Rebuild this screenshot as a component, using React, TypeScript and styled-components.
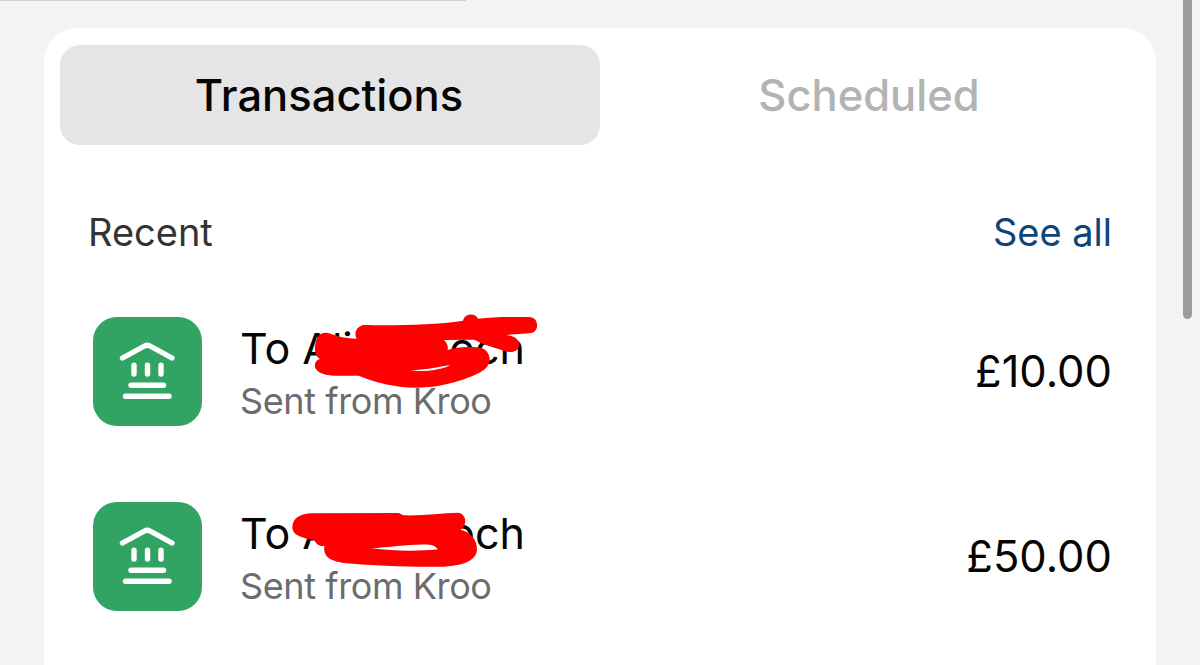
import { useState } from 'react';
import styled, { createGlobalStyle } from 'styled-components';

const GlobalStyle = createGlobalStyle`
    * {
        box-sizing: border-box;
    }

    body {
        margin: 0;
        overflow: hidden;
        background: #f4f4f7;
        font-family: Inter, 'Liberation Sans', sans-serif;
    }
`;

const Screen = styled.div`
    position: relative;
    height: 665px;
    padding: 28px 44px 0;
    overflow: hidden;
`;

const TopDivider = styled.div`
    position: absolute;
    top: 0;
    left: 0;
    width: 466px;
    height: 1px;
    background: #d2d2d5;
`;

const ScrollThumb = styled.div`
    position: absolute;
    top: -10px;
    right: 8px;
    width: 9px;
    height: 329px;
    border-radius: 5px;
    background: #9c9c9e;
`;

const Card = styled.main`
    height: 700px;
    padding: 17px 16px 0;
    border-radius: 34px;
    background: #fff;
`;

const TabList = styled.div`
    display: grid;
    grid-template-columns: 1fr 1fr;
    height: 100px;
`;

const TabButton = styled.button<{ $isActive: boolean }>`
    padding: 0 2px 0 0;
    border: none;
    border-radius: 20px;
    background: ${(props) => (props.$isActive ? '#e5e5e5' : 'transparent')};
    color: ${(props) => (props.$isActive ? '#050505' : '#b3b3b3')};
    font-family: inherit;
    font-size: 43.5px;
    font-weight: 500;
    line-height: 54px;
    cursor: pointer;
`;

const SectionHeader = styled.div`
    display: flex;
    justify-content: space-between;
    align-items: center;
    height: 50px;
    margin-top: 62px;
    padding: 0 28px;
`;

const SectionTitleTypo = styled.div`
    color: #333;
    font-size: 38px;
    line-height: 46px;
`;

const SeeAllLink = styled.a`
    color: #0f4478;
    font-size: 38px;
    line-height: 46px;
    cursor: pointer;
`;

const TransactionList = styled.div`
    display: flex;
    flex-direction: column;
    gap: 76px;
    padding: 60px 28px 0 33px;
`;

const TransactionRow = styled.div`
    display: flex;
    align-items: center;
    height: 109px;
`;

const BankBadge = styled.div`
    width: 109px;
    height: 109px;
    border-radius: 24px;
    background: #31a464;
`;

const TransactionInfo = styled.div`
    position: relative;
    flex: 1;
    height: 109px;
    margin-left: 38px;
    padding-top: 5px;
`;

const PayeeTypo = styled.div`
    display: flex;
    width: 285px;
    color: #050505;
    font-size: 43px;
    line-height: 52px;
    white-space: pre;
`;

const PayeeEnd = styled.span`
    margin-left: auto;
`;

const SourceTypo = styled.div`
    padding-top: 1px;
    color: #6c6c6c;
    font-size: 36px;
    line-height: 52px;
    letter-spacing: -0.4px;
`;

const Scribble = styled.svg<{ $top: number }>`
    position: absolute;
    top: ${(props) => props.$top}px;
    left: -10px;
    width: 320px;
    height: 130px;
`;

const AmountTypo = styled.div`
    padding-bottom: 2px;
    color: #050505;
    font-size: 43.5px;
    line-height: 54px;
`;

interface ITransaction {
    id: number;
    start: string;
    end: string;
    source: string;
    amount: string;
    scribble: string;
    scribbleTop: number;
}

// Scribbles are drawn on a 960x390 grid and scaled down to the payee area
const transactions: ITransaction[] = [
    {
        id: 1,
        start: 'To Ali',
        end: 'och',
        source: 'Sent from Kroo',
        amount: '£10.00',
        scribbleTop: -17,
        scribble:
            'M256 133C258 112 270 98 287 98C305 98 316 113 380 116C370 99 381 77 403 75C490 77 615 75 699 62C704 40 735 38 744 56C790 50 850 51 897 51C929 51 930 99 898 100L825 105C848 106 868 116 868 134C866 154 847 160 824 153L758 132C745 125 737 120 731 119L642 120C652 130 655 140 653 150C682 140 711 140 743 142C768 144 781 163 779 183C773 213 735 226 695 240C655 253 611 263 555 263C493 262 437 247 386 227L310 227C276 225 251 213 255 192C257 183 264 178 270 177C257 170 252 151 256 133ZM541 211C575 216 630 212 662 195C624 201 588 209 541 211Z'
    },
    {
        id: 2,
        start: 'To A',
        end: 'och',
        source: 'Sent from Kroo',
        amount: '£50.00',
        scribbleTop: -12,
        scribble:
            'M187 112C187 86 210 70 246 70L505 69C513 71 515 75 522 76C580 78 634 68 684 68C709 71 714 104 692 119C725 128 742 150 741 181C737 213 699 227 643 230C552 232 434 228 350 220C303 215 279 202 283 168C266 170 257 160 253 150C217 145 187 137 187 112ZM424 175C490 183 558 185 624 178C616 168 606 164 598 164C544 161 482 172 424 175Z'
    }
];

const BankIcon = () => (
    <svg width="109" height="109" viewBox="0 0 109 109" fill="none" stroke="#fff" strokeWidth="5.4" strokeLinecap="round" strokeLinejoin="round">
        <path d="M29.5 41 51.5 29Q54.3 27.4 57 29L79 41" />
        <path d="M41 48.2V57M54.5 48.2V57M68 48.2V57M38 68.3H70.5M32.5 79.3H76" />
    </svg>
);

const App = () => {
    const [activeTab, setActiveTab] = useState<string>('Transactions');

    return (
        <Screen>
            <GlobalStyle />
            <TopDivider />
            <Card>
                <TabList>
                    {['Transactions', 'Scheduled'].map((tab) => (
                        <TabButton key={tab} $isActive={tab === activeTab} onClick={() => setActiveTab(tab)}>
                            {tab}
                        </TabButton>
                    ))}
                </TabList>
                <SectionHeader>
                    <SectionTitleTypo>Recent</SectionTitleTypo>
                    <SeeAllLink>See all</SeeAllLink>
                </SectionHeader>
                <TransactionList>
                    {transactions.map((value) => (
                        <TransactionRow key={value.id}>
                            <BankBadge>
                                <BankIcon />
                            </BankBadge>
                            <TransactionInfo>
                                <PayeeTypo>
                                    <span>{value.start}</span>
                                    <PayeeEnd>{value.end}</PayeeEnd>
                                </PayeeTypo>
                                <SourceTypo>{value.source}</SourceTypo>
                                <Scribble $top={value.scribbleTop} viewBox="0 0 960 390">
                                    <path d={value.scribble} fill="#fe0000" fillRule="evenodd" />
                                </Scribble>
                            </TransactionInfo>
                            <AmountTypo>{value.amount}</AmountTypo>
                        </TransactionRow>
                    ))}
                </TransactionList>
            </Card>
            <ScrollThumb />
        </Screen>
    );
};

export default App;
